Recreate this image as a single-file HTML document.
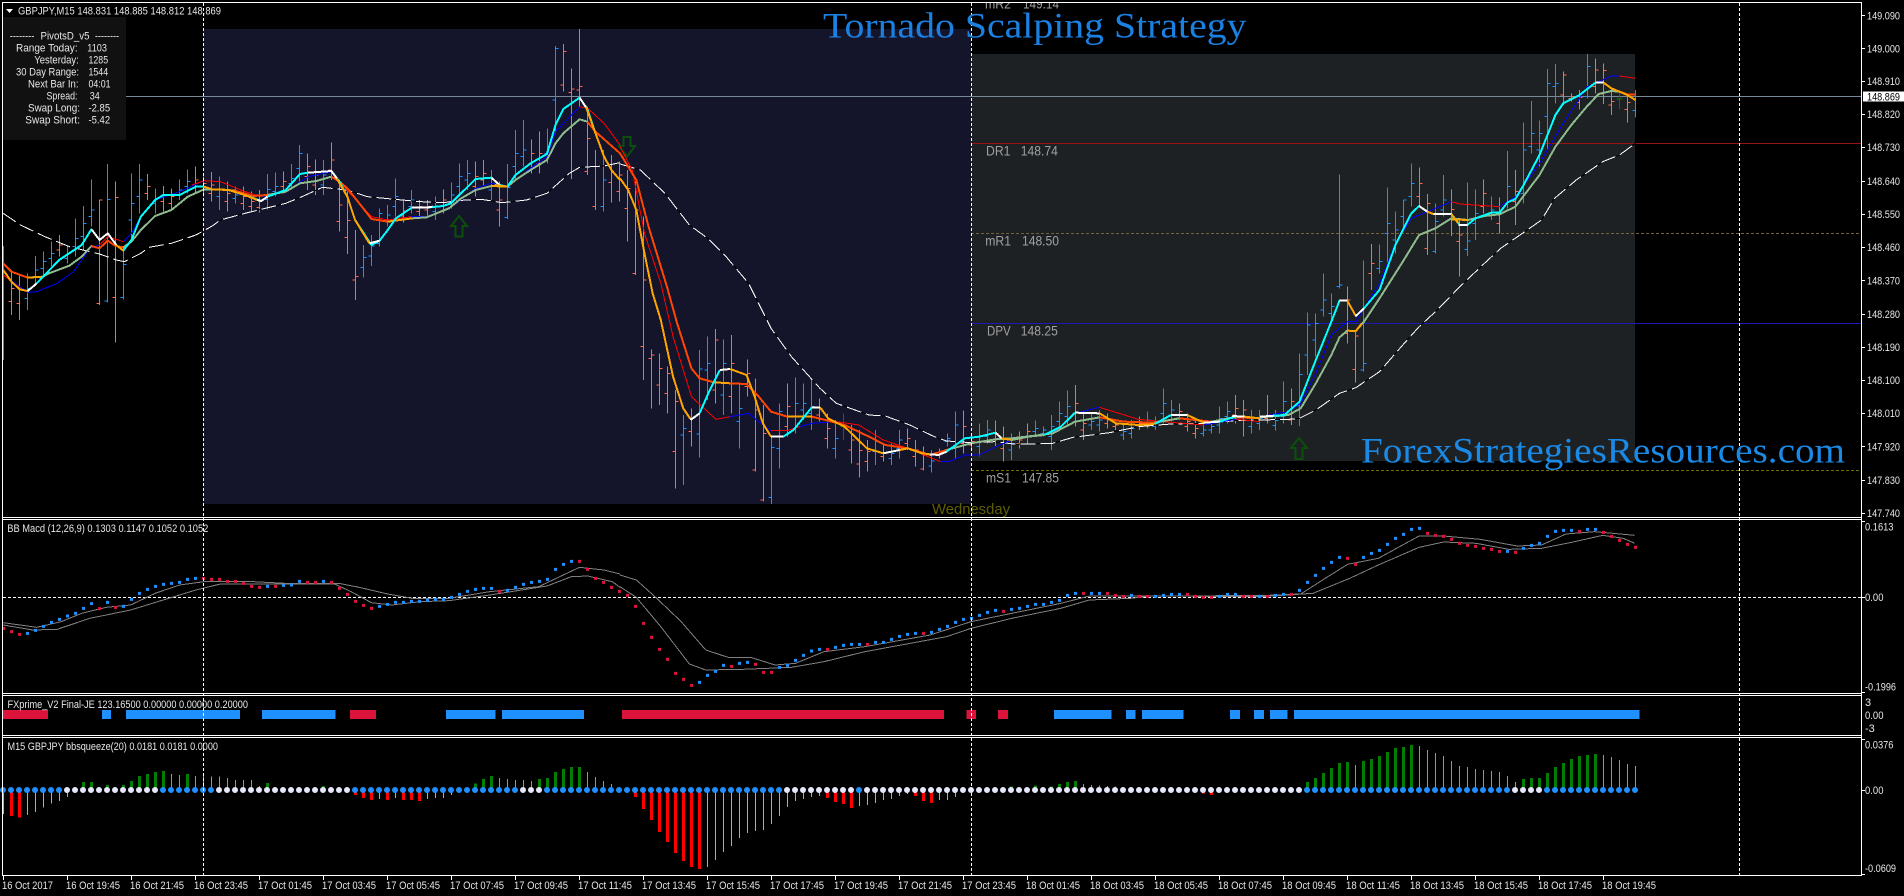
<!DOCTYPE html>
<html lang="en">
<head>
<meta charset="utf-8">
<title>Tornado Scalping Strategy</title>
<style>
html,body{margin:0;padding:0;background:#000;width:1904px;height:896px;overflow:hidden}
svg{position:absolute;left:0;top:0;display:block}
path,polyline{fill:none;vector-effect:non-scaling-stroke}
polyline{stroke-linejoin:round;shape-rendering:crispEdges}
text{font-family:"Liberation Sans",sans-serif;font-size:11px;fill:#e6e6e6}
.piv{font-size:13.5px;fill:#a0a0a0}
.ttl{font-family:"Liberation Serif",serif;font-size:36px;fill:#1a80e2}
.c{shape-rendering:crispEdges}
.f{stroke-width:2;stroke:#0ff}
.fo{stroke-width:2;stroke:#ffa500}
.fw{stroke-width:2;stroke:#fff}
.s{stroke-width:2;stroke:#8fbc8f}
.so{stroke-width:2;stroke:#ff4500}
.m{stroke-width:1;stroke:#0000ff}
.mr{stroke-width:1;stroke:#ff0000}
.k{stroke-width:1;stroke:#000}
.w{stroke-width:1;stroke:#fff;stroke-dasharray:15 5}
.g{stroke-width:1;stroke:#808080}
</style>
</head>
<body>
<svg width="1904" height="896" viewBox="0 0 1904 896" xmlns="http://www.w3.org/2000/svg">
<rect width="1904" height="896" fill="#000"/>
<rect x="203" y="29" width="768" height="475" fill="#14142b"/>
<rect x="971" y="54" width="664" height="407" fill="#1e2124"/>

<text class="piv" x="985" y="8.5" textLength="26" lengthAdjust="spacingAndGlyphs">mR2</text>
<text class="piv" x="1023" y="8.5" textLength="36" lengthAdjust="spacingAndGlyphs">149.14</text>
<rect width="1904" height="2" fill="#000"/>

<!-- levels -->
<g class="c">
<path d="M971 143.5H1861" stroke="#9a1414"/>
<path d="M971 233.5H1861" stroke="#7a6238" stroke-dasharray="3 2"/>
<path d="M971 323.5H1861" stroke="#1c1cb4"/>
<path d="M971 470.5H1861" stroke="#6e6e00" stroke-dasharray="3 2"/>
<path d="M126 96.5H1861" stroke="#778899"/>
</g>
<text class="piv" x="986" y="155.5" textLength="24.5" lengthAdjust="spacingAndGlyphs">DR1</text>
<text class="piv" x="1020.8" y="155.5" textLength="37" lengthAdjust="spacingAndGlyphs">148.74</text>
<text class="piv" x="985.3" y="245.5" textLength="25.7" lengthAdjust="spacingAndGlyphs">mR1</text>
<text class="piv" x="1022" y="245.5" textLength="37" lengthAdjust="spacingAndGlyphs">148.50</text>
<text class="piv" x="987" y="335.5" textLength="23.7" lengthAdjust="spacingAndGlyphs">DPV</text>
<text class="piv" x="1020.8" y="335.5" textLength="37" lengthAdjust="spacingAndGlyphs">148.25</text>
<text class="piv" x="986" y="482.5" textLength="25" lengthAdjust="spacingAndGlyphs">mS1</text>
<text class="piv" x="1022" y="482.5" textLength="37" lengthAdjust="spacingAndGlyphs">147.85</text>
<text x="932" y="514" style="font-size:15px;fill:#5f5f00" textLength="78" lengthAdjust="spacingAndGlyphs">Wednesday</text>

<!-- price bars -->
<g transform="scale(1 .33333)" class="c">
<path stroke="#1e90ff" d="M3.5 738V1080M27.5 820V930m-3-35h3m0-30h3M35.5 768V855m-3-25h3m0-20h3M43.5 755V830m-3-25h3m0-20h3M51.5 725V800m-3-25h3m0-15h3M67.5 735V790m-3-15h3m0-15h3M75.5 655V770m-3-30h3m0-25h3M83.5 618V750m-3-40h3m0-40h3M91.5 538V680m-3-30h3m0-20h3M107.5 492V908m-3-5h3m0-305h3M123.5 740V898m-3-5h3m0-100h3M131.5 520V720m-3-60h3m0-50h3M139.5 492V640m-3-50h3m0-50h3M155.5 566V640m-3-30h3m0-15h3M179.5 538V600m-3-15h3m0-15h3M187.5 508V580m-3-20h3m0-15h3M219.5 530V630m-3-40h3m0-20h3M235.5 560V610m-3-15h3m0-10h3M267.5 522V628m-3-30h3m0-30h3M275.5 518V590m-3-15h3m0-15h3M291.5 492V565m-3-15h3m0-15h3M299.5 435V545m-3-40h3m0-45h3M323.5 480V585m-3-30h3m0-30h3M363.5 735V833m-3-30h3m0-30h3M371.5 705V798m-3-30h3m0-30h3M379.5 625V740m-3-10h3m0-90h3M387.5 615V680m-3-20h3m0-15h3M395.5 535V650m-3-30h3m0-30h3M411.5 570V640m-3-20h3m0-20h3M435.5 590V660m-3-25h3m0-15h3M451.5 548V625m-3-20h3m0-20h3M459.5 490V590m-3-30h3m0-30h3M467.5 480V570m-3-30h3m0-20h3M491.5 510V600m-3-30h3m0-20h3M507.5 492V657m-3-5h3m0-90h3M515.5 390V540m-3-40h3m0-40h3M523.5 360V500m-3-30h3m0-20h3M547.5 385V490m-3-30h3m0-20h3M555.5 138V400m-3-100h3m0-155h3M603.5 450V635m-3-15h3m0-80h3M683.5 1245V1455m-3-150h3m0-20h3M699.5 1050V1372m-3-70h3m0-195h3M707.5 1010V1200m-3-90h3m0-20h3M723.5 1018V1245m-3-60h3m0-95h3M739.5 1150V1345m-3-80h3m0-40h3M771.5 1310V1512m-3-20h3m0-150h3M779.5 1210V1405m-3-60h3m0-110h3M795.5 1132V1300m-3-50h3m0-40h3M803.5 1150V1260m-3-30h3m0-20h3M811.5 1135V1290m-3-50h3m0-20h3M835.5 1260V1375m-3-30h3m0-30h3M875.5 1290V1395m-3-40h3m0-30h3M891.5 1330V1395m-3-20h3m0-15h3M899.5 1290V1375m-3-30h3m0-25h3M931.5 1350V1418m-3-20h3m0-15h3M947.5 1300V1340m-3-15h3m0-10h3M955.5 1235V1375m-3-50h3m0-50h3M979.5 1270V1370m-3-30h3m0-30h3M987.5 1260V1330m-3-20h3m0-20h3M1011.5 1300V1380m-3-30h3m0-20h3M1035.5 1262V1310m-3-15h3m0-10h3M1043.5 1280V1310m-3-10h3m0-10h3M1051.5 1245V1350m-3-40h3m0-30h3M1059.5 1205V1290m-3-25h3m0-25h3M1067.5 1172V1280m-3-30h3m0-30h3M1091.5 1240V1290m-3-15h3m0-10h3M1099.5 1230V1295m-3-20h3m0-15h3M1123.5 1270V1320m-3-15h3m0-10h3M1131.5 1260V1315m-3-15h3m0-15h3M1147.5 1235V1285m-3-15h3m0-10h3M1155.5 1250V1290m-3-10h3m0-10h3M1163.5 1165V1270m-3-30h3m0-30h3M1171.5 1200V1265m-3-20h3m0-15h3M1203.5 1270V1310m-3-10h3m0-10h3M1211.5 1265V1300m-3-10h3m0-10h3M1219.5 1220V1300m-3-25h3m0-20h3M1227.5 1205V1270m-3-20h3m0-15h3M1251.5 1230V1300m-3-20h3m0-20h3M1259.5 1230V1290m-3-20h3m0-15h3M1275.5 1230V1292m-3-15h3m0-15h3M1283.5 1145V1270m-3-20h3m0-45h3M1299.5 1060V1278m-3-60h3m0-95h3M1307.5 937V1125m-3-60h3m0-90h3M1315.5 940V1070m-3-50h3m0-50h3M1323.5 820V950m-3-20h3m0-30h3M1331.5 880V970m-3-30h3m0-20h3M1339.5 523V865m-3-5h3m0-5h3M1363.5 782V1115m-3-5h3m0-20h3M1379.5 733V820m-3-15h3m0-20h3M1387.5 562V800m-3-100h3m0-30h3M1395.5 634V760m-3-40h3m0-30h3M1403.5 600V690m-3-40h3m0-50h3M1411.5 490V620m-3-30h3m0-40h3M1435.5 610V760m-3-5h3m0-90h3M1443.5 525V650m-3-20h3m0-30h3M1467.5 547V768m-3-20h3m0-25h3M1475.5 568V720m-3-50h3m0-30h3M1491.5 590V660m-3-15h3m0-15h3M1507.5 453V625m-3-15h3m0-50h3M1523.5 367V610m-3-30h3m0-130h3M1531.5 303V460m-3-20h3m0-40h3M1539.5 362V500m-3-50h3m0-50h3M1547.5 207V450m-3-100h3m0-100h3M1555.5 192V310m-3-50h3m0-10h3M1587.5 162V295m-3-5h3m0-90h3M1635.5 270V352m-3-20h3"/>
<path stroke="#ff6a4d" d="M11.5 810V945m-3-40h3m0-40h3M19.5 820V960m-3-50h3m0-40h3M59.5 705V770m-3-20h3m0-15h3M99.5 598V915m-3-5h3m0-310h3M115.5 545V1028m-3-135h3m0-300h3M147.5 522V600m-3-20h3m0-20h3M163.5 558V635m-3-30h3m0-20h3M171.5 566V630m-3-20h3m0-20h3M195.5 500V580m-3-25h3m0-15h3M203.5 530V590m-3-20h3m0-20h3M211.5 516V605m-3-25h3m0-25h3M227.5 545V635m-3-30h3m0-25h3M243.5 560V630m-3-20h3m0-20h3M251.5 575V635m-3-15h3m0-15h3M259.5 570V638m-3-15h3m0-20h3M283.5 515V580m-3-20h3m0-15h3M307.5 460V570m-3-40h3m0-30h3M315.5 478V585m-3-30h3m0-30h3M331.5 427V540m-3-30h3m0-30h3M339.5 540V695m-3-30h3m0-50h3M347.5 575V762m-3-50h3m0-50h3M355.5 690V900m-3-60h3m0-10h3M403.5 600V668m-3-20h3m0-15h3M419.5 600V650m-3-15h3m0-15h3M427.5 600V650m-3-20h3m0-10h3M443.5 568V640m-3-20h3m0-20h3M475.5 485V590m-3-30h3m0-30h3M483.5 480V560m-3-20h3m0-20h3M499.5 545V680m-3-50h3m0-30h3M531.5 418V520m-3-30h3m0-30h3M539.5 395V520m-3-30h3m0-30h3M563.5 132V275m-3-20h3m0-100h3M571.5 205V537m-3-260h3m0-10h3M579.5 87V320m-3-50h3m0-10h3M587.5 320V525m-3-10h3m0-100h3M595.5 450V630m-3-10h3m0-120h3M611.5 465V608m-3-60h3m0-30h3M619.5 485V605m-3-30h3m0-50h3M627.5 510V725m-3-100h3m0-60h3M635.5 545V825m-3-5h3m0-190h3M643.5 650V1140m-3-100h3m0-200h3M651.5 1048V1225m-3-150h3m0-10h3M659.5 1060V1215m-3-60h3m0-50h3M667.5 1100V1240m-3-60h3m0-60h3M675.5 1170V1465m-3-110h3m0-150h3M691.5 1225V1340m-3-45h3m0-40h3M715.5 987V1210m-3-40h3m0-150h3M731.5 1005V1240m-3-50h3m0-100h3M747.5 1078V1190m-3-30h3m0-40h3M755.5 1135V1415m-3-5h3m0-180h3M763.5 1215V1505m-3-5h3m0-200h3M787.5 1150V1310m-3-30h3m0-60h3M819.5 1195V1265m-3-20h3m0-20h3M827.5 1240V1345m-3-30h3m0-30h3M851.5 1275V1390m-3-40h3m0-30h3M859.5 1290V1432m-3-40h3m0-40h3M867.5 1320V1415m-3-30h3m0-30h3M883.5 1335V1385m-3-15h3m0-10h3M907.5 1285V1350m-3-20h3m0-15h3M915.5 1320V1400m-3-30h3m0-20h3M923.5 1340V1412m-3-5h3m0-40h3M939.5 1345V1375m-3-10h3m0-5h3M963.5 1232V1360m-3-30h3m0-50h3M971.5 1300V1350m-3-15h3m0-10h3M995.5 1262V1340m-3-20h3m0-20h3M1003.5 1280V1385m-3-40h3m0-30h3M1019.5 1295V1345m-3-15h3m0-10h3M1027.5 1270V1330m-3-20h3m0-15h3M1075.5 1155V1280m-3-40h3m0-30h3M1083.5 1235V1320m-3-30h3m0-20h3M1107.5 1240V1285m-3-15h3m0-10h3M1115.5 1265V1290m-3-10h3m0-5h3M1139.5 1250V1290m-3-10h3m0-10h3M1179.5 1210V1260m-3-15h3m0-10h3M1187.5 1240V1295m-3-15h3m0-15h3M1195.5 1260V1315m-3-15h3m0-15h3M1235.5 1185V1270m-3-25h3m0-20h3M1243.5 1200V1310m-3-50h3m0-30h3M1267.5 1185V1270m-3-15h3m0-10h3M1291.5 1165V1275m-3-15h3m0-55h3M1347.5 860V1030m-3-30h3m0-100h3M1355.5 990V1148m-3-40h3m0-100h3M1371.5 732V870m-3-50h3m0-30h3M1419.5 502V620m-3-30h3m0-40h3M1427.5 582V765m-3-20h3m0-135h3M1451.5 568V708m-3-50h3m0-30h3M1459.5 660V830m-3-105h3m0-20h3M1483.5 538V640m-3-20h3m0-40h3M1499.5 593V700m-3-30h3m0-30h3M1515.5 510V675m-3-70h3m0-30h3M1563.5 215V315m-3-30h3m0-60h3M1571.5 280V305m-3-10h3m0-5h3M1579.5 270V328m-3-20h3m0-15h3M1595.5 175V280m-3-20h3m0-50h3M1603.5 190V312m-3-30h3m0-70h3M1611.5 265V345m-3-30h3m0-10h3M1627.5 290V368m-3-40h3m0-20h3"/>
<path stroke="#007a00" d="M843.5 1240V1320m-3-40h6M1619.5 270V327m-3-30h6"/>
</g>

<!-- arrows -->
<g fill="none" stroke="#0b4f0b" stroke-width="2" class="c">
<path d="M459 216L467 226H462.500V236.500H455.500V226H451Z" style="shape-rendering:auto"/>
<path d="M627 156.500L635 146H630.500V137H623.500V146H619Z" style="shape-rendering:auto"/>
<path d="M1299 438L1307 448H1302.500V459H1295.500V448H1291Z" style="shape-rendering:auto"/>
</g>

<!-- zone 1 lines -->
<g transform="scale(.40816 .33333)">
<polyline class="k" points="8,640 50,675 110,710 170,740 244,762 285,780 305,785 345,760 365,742 420,730 480,705 520,678 540,660 600,640 700,610 740,590 790,562 850,570 900,590 985,600 1030,605 1085,608 1140,600 1180,598 1230,608 1290,600 1340,580 1395,520 1420,502 1480,498 1519,488"/>
<polyline class="w" points="8,640 50,675 110,710 170,740 244,762 285,780 305,785 345,760 365,742 420,730 480,705 520,678 540,660 600,640 700,610 740,590 790,562 850,570 900,590 985,600 1030,605 1085,608 1140,600 1180,598 1230,608 1290,600 1340,580 1395,520 1420,502 1480,498 1519,488"/>
<polyline class="m" points="8,825 68,877 90,875 140,850 180,815 220,745 244,735 264,710 302,725 322,700 345,650 380,600 440,575 500,542 540,545 600,575 640,590 700,575 755,530 812,515 850,570 910,650 950,660 1010,650 1045,650 1105,622 1165,565 1204,550 1243,560 1300,505 1340,470 1361,395 1420,320 1440,325 1480,370 1519,435"/>
<polyline class="mr" points="8,825 50,865"/><polyline class="mr" points="244,735 264,710 302,725"/><polyline class="mr" points="470,555 500,542 540,545 600,575 640,590"/><polyline class="mr" points="812,515 850,570 910,650 950,660 1010,650"/><polyline class="mr" points="1420,320 1440,325 1480,370 1519,435"/>
<polyline class="s" points="8,790 28,815 68,833 105,830 120,820 170,797 200,770 224,738 244,745 264,722 283,738 302,742 322,725 345,690 380,648 420,630 460,590 500,568 540,568 575,572 620,588 655,585 700,575 735,550 775,543 812,530 832,545 851,565 890,625 910,657 950,665 1010,655 1045,652 1100,625 1130,595 1165,570 1204,558 1243,560 1263,540 1300,510 1340,480 1361,430 1380,400 1420,358 1439,365 1459,395 1519,460"/>
<polyline class="so" points="8,790 28,815 68,833"/><polyline class="fo" points="68,833 105,830"/><polyline class="so" points="224,738 244,745 264,722 283,738 302,742"/><polyline class="fo" points="520,568 540,568 575,572"/><polyline class="so" points="575,572 620,588 655,585"/><polyline class="so" points="812,530 832,545 851,565 890,625 910,657 950,665"/><polyline class="fo" points="950,665 1010,655"/><polyline class="fo" points="1204,558 1243,560"/><polyline class="so" points="1439,365 1459,395 1519,460"/>
<polyline class="f" points="8,810 28,845 48,868 68,873 90,850 145,780 200,735 224,688 244,720 264,700 285,735 302,752 322,720 345,650 380,600 400,585 440,585 480,560 500,560 520,568 560,570 600,585 640,603 655,590 700,570 735,522 755,518 812,513 832,545 851,590 870,660 910,735 930,722 950,690 970,655 1010,622 1045,623 1085,618 1105,610 1165,537 1204,533 1224,555 1243,560 1263,525 1300,490 1340,462 1361,375 1380,327 1420,293 1440,330 1459,400 1480,470 1498,510 1519,540"/>
<polyline class="fo" points="8,810 28,845 48,868 68,873"/><polyline class="fw" points="68,873 90,850"/><polyline class="fw" points="224,688 244,720 264,700 285,735"/><polyline class="fo" points="285,735 302,752"/><polyline class="fo" points="500,560 520,568 560,570 600,585 630,600"/><polyline class="fw" points="630,600 640,603 655,590"/><polyline class="fw" points="755,518 812,513 825,535"/><polyline class="fo" points="825,535 851,590 870,660 905,730"/><polyline class="fw" points="905,730 930,722"/><polyline class="fw" points="1010,622 1045,623 1060,620"/><polyline class="fw" points="1204,533 1224,555"/><polyline class="fo" points="1212,555 1243,560"/><polyline class="fw" points="1420,293 1436,322"/><polyline class="fo" points="1436,322 1459,400 1480,470 1498,510 1519,540"/>
</g>

<!-- zone 2 lines -->
<g transform="translate(620 0) scale(.40816 .33333)">
<polyline class="k" points="0,492 50,510 110,580 170,675 215,715 260,770 315,850 370,985 420,1070 490,1165 530,1210 610,1245 650,1248 710,1275 770,1310 800,1323 860,1328 920,1325 970,1333 1060,1330 1110,1312 1200,1298 1270,1280 1350,1272 1430,1270 1510,1262 1568,1260"/>
<polyline class="w" points="0,492 50,510 110,580 170,675 215,715 260,770 315,850 370,985 420,1070 490,1165 530,1210 610,1245 650,1248 710,1275 770,1310 800,1323 860,1328 920,1325 970,1333 1060,1330 1110,1312 1200,1298 1270,1280 1350,1272 1430,1270 1510,1262 1568,1260"/>
<polyline class="mr" points="0,440 30,510 60,700 100,850 130,1010 175,1190 235,1258 270,1250"/>
<polyline class="m" points="270,1250 315,1240 345,1270 370,1292"/>
<polyline class="mr" points="370,1292 410,1292 440,1280"/>
<polyline class="m" points="440,1280 470,1270 530,1265"/>
<polyline class="mr" points="530,1265 585,1275 645,1320 705,1345 785,1385"/>
<polyline class="m" points="785,1385 805,1385 845,1365 880,1365 920,1340 960,1320 1060,1300 1115,1240 1175,1222"/>
<polyline class="mr" points="1175,1222 1270,1258 1360,1268 1430,1275"/>
<polyline class="m" points="1430,1275 1510,1258"/>
<polyline class="mr" points="1510,1258 1568,1265"/>
<polyline class="so" points="0,460 40,540 70,680 115,860 140,970 175,1105 195,1135 230,1147 270,1150 310,1152 340,1190 370,1235 410,1250 470,1250 510,1262 550,1275 610,1310 650,1335 705,1345 760,1365 800,1350"/>
<polyline class="s" points="800,1350 860,1330 920,1318 960,1315 1030,1305 1060,1300 1115,1265 1175,1252"/>
<polyline class="fo" points="230,1147 270,1150"/>
<polyline class="fo" points="410,1250 470,1250"/>
<polyline class="so" points="1175,1252 1235,1265 1310,1268"/>
<polyline class="s" points="1310,1268 1370,1255"/>
<polyline class="so" points="1370,1255 1410,1260 1450,1265"/>
<polyline class="s" points="1450,1265 1490,1255 1510,1252"/>
<polyline class="so" points="1510,1252 1568,1255"/>
<polyline class="fo" points="0,535 20,570 40,630 60,760 80,880 100,960 130,1130 155,1225 172,1256"/>
<polyline class="fw" points="172,1256 175,1258 195,1240"/>
<polyline class="f" points="195,1240 220,1170 245,1110"/>
<polyline class="fw" points="245,1110 270,1107"/>
<polyline class="fo" points="270,1107 310,1125 330,1190 350,1270 370,1310"/>
<polyline class="fw" points="370,1310 400,1310"/>
<polyline class="f" points="400,1310 425,1290 470,1222"/>
<polyline class="fw" points="470,1222 490,1222"/>
<polyline class="fo" points="490,1222 510,1255 550,1280 605,1345 645,1360"/>
<polyline class="fw" points="645,1360 685,1350"/>
<polyline class="fo" points="685,1350 705,1345 740,1360 760,1363"/>
<polyline class="fw" points="760,1363 780,1365 800,1355"/>
<polyline class="f" points="800,1355 845,1315 880,1310 920,1298"/>
<polyline class="fw" points="920,1298 935,1315"/>
<polyline class="fo" points="935,1315 960,1320"/>
<polyline class="s" points="960,1320 1000,1310 1040,1305"/>
<polyline class="f" points="1040,1305 1080,1280 1115,1238"/>
<polyline class="fw" points="1115,1238 1175,1240"/>
<polyline class="fo" points="1175,1240 1215,1270 1270,1275 1310,1272"/>
<polyline class="f" points="1310,1272 1350,1245"/>
<polyline class="fw" points="1350,1245 1390,1245"/>
<polyline class="fo" points="1390,1245 1430,1268"/>
<polyline class="fw" points="1430,1268 1470,1265"/>
<polyline class="f" points="1470,1265 1510,1248"/>
<polyline class="fw" points="1500,1248 1530,1250"/>
<polyline class="fo" points="1530,1250 1568,1255"/>
</g>

<!-- zone 3 lines -->
<g transform="translate(1264 0) scale(.40816 .33333)">
<polyline class="k" points="-10,1260 60,1258 87,1255 127,1230 185,1180 225,1163 283,1115 340,1035 380,980 420,935 480,860 540,790 580,745 680,660 712,595 765,540 830,485 871,465 910,430"/>
<polyline class="w" points="-10,1260 60,1258 87,1255 127,1230 185,1180 225,1163 283,1115 340,1035 380,980 420,935 480,860 540,790 580,745 680,660 712,595 765,540 830,485 871,465 910,430"/>
<polyline class="m" points="-10,1250 60,1235 90,1210 127,1120 165,1005 204,965 225,965 283,850 322,730 361,655 420,625 459,605 480,612 577,620 616,590 675,490 733,370 792,260 851,228 871,228"/>
<polyline class="mr" points="459,605 480,612 577,620"/>
<polyline class="mr" points="871,228 910,235"/>
<polyline class="s" points="-10,1252 60,1245 90,1225 127,1150 165,1065 185,1012 204,992 225,993 245,965 283,895 340,785 380,705 420,685 459,655 500,660 540,648 577,643 616,620 675,525 714,440 753,375 792,318 820,282 851,273 871,275 890,283 910,283"/>
<polyline class="fo" points="204,992 225,993 240,970"/>
<polyline class="fo" points="459,658 500,660"/>
<polyline class="so" points="871,275 890,283 910,283"/>
<polyline class="f" points="-10,1250 50,1245 87,1205 127,1080 165,965 185,902 204,902 225,948 245,925 283,870 322,735 361,640 380,618 400,635 415,642 459,642 480,675 498,675 518,655 557,638 577,638 597,607 616,597 636,555 675,465 714,345 733,310 773,285 812,248 832,248 851,265 871,275 890,285 910,300"/>
<polyline class="fw" points="-10,1250 25,1247"/>
<polyline class="fw" points="185,902 204,902"/>
<polyline class="fo" points="204,902 225,948"/>
<polyline class="fw" points="225,948 245,925"/>
<polyline class="fw" points="380,618 400,635"/>
<polyline class="fo" points="400,635 415,642"/>
<polyline class="fw" points="415,642 459,642"/>
<polyline class="fo" points="459,642 476,670"/>
<polyline class="fw" points="476,675 498,675"/>
<polyline class="fw" points="812,248 832,248"/>
<polyline class="fo" points="832,248 851,265 871,275 890,285 910,300"/>
</g>

<!-- MACD pane -->
<g transform="translate(0 510) scale(1 .33333)" class="c">
<path stroke="#fff" stroke-dasharray="3 2" d="M3 262H1861"/>
</g>
<g transform="translate(0 510) scale(.40816 .33333)">
<polyline class="g" points="8,338 90,352 150,335 200,310 260,292 320,285 380,250 440,225 500,215 620,215 700,220 830,220 880,232 950,252 1010,265 1100,265 1200,245 1320,230 1380,195 1420,172 1480,180 1519,192"/>
<polyline class="g" points="8,345 80,360 140,358 220,325 320,300 400,270 480,240 540,222 820,222 860,245 910,278 960,285 1030,275 1100,272 1200,255 1340,228 1400,200 1440,198 1500,215 1519,232"/>
</g>
<g transform="translate(620 510) scale(.40816 .33333)">
<polyline class="g" points="0,195 40,210 90,265 150,335 210,420 265,442 320,442 380,465 430,460 500,425 600,410 760,375 860,335 960,310 1080,280 1150,258 1568,257"/>
<polyline class="g" points="0,230 40,262 100,350 170,462 210,480 300,478 420,472 500,455 600,425 800,380 860,355 960,325 1080,295 1150,270 1250,265 1300,258 1568,260"/>
</g>
<g transform="translate(1264 510) scale(.40816 .33333)">
<polyline class="g" points="-10,257 90,252 150,205 205,163 280,145 380,78 440,78 530,88 620,108 680,105 740,72 810,65 908,76"/>
<polyline class="g" points="-10,260 120,250 210,205 280,165 380,112 440,96 520,100 600,118 680,115 750,98 830,76 880,85 908,100"/>
</g>
<g transform="translate(0 510) scale(1 .33333)">
<path stroke="#1e90ff" stroke-width="3" stroke-linecap="square" d="M27.5 370h.01M35.5 361h.01M43.5 349h.01M51.5 337h.01M59.5 328h.01M67.5 318h.01M75.5 310h.01M83.5 295h.01M91.5 281h.01M107.500 277h.01M123.5 289h.01M131.5 268h.01M139.5 250h.01M147.5 238h.01M155.5 229h.01M163.5 223h.01M171.5 220h.01M179.5 217h.01M187.5 208h.01M195.5 205h.01M267.5 229h.01M283.5 226h.01M291.5 225h.01M299.5 214h.01M323.5 214h.01M379.5 289h.01M387.5 283h.01M395.5 277h.01M403.5 277h.01M411.5 274h.01M419.5 274h.01M427.5 271h.01M435.5 268h.01M443.5 268h.01M451.5 262h.01M459.5 253h.01M467.5 244h.01M475.5 238h.01M483.5 235h.01M491.5 235h.01M507.5 241h.01M515.5 232h.01M523.5 223h.01M531.5 217h.01M539.5 214h.01M547.5 208h.01M555.5 178h.01M563.5 163h.01M571.5 154h.01M699.5 517h.01M707.5 496h.01M715.5 484h.01M723.5 466h.01M739.5 460h.01M747.5 457h.01M779.5 472h.01M787.5 466h.01M795.5 451h.01M803.5 436h.01M811.5 423h.01M819.5 418h.01M835.5 412h.01M843.5 406h.01M851.5 403h.01M859.5 403h.01M875.5 397h.01M883.5 397h.01M891.5 388h.01M899.5 379h.01M907.5 373h.01M915.5 370h.01M931.5 367h.01M939.5 358h.01M947.5 349h.01M955.5 337h.01M963.5 328h.01M971.5 325h.01M979.5 316h.01M987.5 307h.01M995.5 301h.01M1011.5 298h.01M1019.5 295h.01M1027.5 289h.01M1035.5 283h.01M1043.5 283h.01M1051.5 277h.01M1059.5 271h.01M1067.5 256h.01M1075.5 250h.01M1091.5 250h.01M1099.5 250h.01M1131.5 256h.01M1155.5 259h.01M1163.5 256h.01M1171.5 253h.01M1179.5 253h.01M1219.5 259h.01M1227.5 253h.01M1235.5 253h.01M1259.5 259h.01M1275.5 256h.01M1283.5 253h.01M1299.5 241h.01M1307.5 217h.01M1315.5 196h.01M1323.5 175h.01M1331.5 157h.01M1339.5 142h.01M1363.5 142h.01M1371.5 130h.01M1379.5 121h.01M1387.5 103h.01M1395.5 85h.01M1403.5 73h.01M1411.5 58h.01M1419.5 55h.01M1507.5 124h.01M1523.5 115h.01M1531.5 106h.01M1539.5 100h.01M1547.5 79h.01M1555.5 64h.01M1563.5 61h.01M1571.5 61h.01M1587.5 58h.01M1595.5 58h.01"/>
<path stroke="#dc143c" stroke-width="3" stroke-linecap="square" d="M3.5 355h.01M11.5 365h.01M19.5 373h.01M99.5 296h.01M115.5 292h.01M203.5 205h.01M211.5 208h.01M219.5 208h.01M227.5 214h.01M235.5 214h.01M243.5 220h.01M251.5 229h.01M259.5 232h.01M275.5 229h.01M307.5 217h.01M315.5 217h.01M331.5 217h.01M339.5 235h.01M347.5 253h.01M355.5 274h.01M363.5 286h.01M371.5 295h.01M499.5 244h.01M579.5 154h.01M587.5 178h.01M595.5 205h.01M603.5 217h.01M611.5 232h.01M619.5 244h.01M627.5 256h.01M635.5 289h.01M643.5 340h.01M651.5 382h.01M659.5 418h.01M667.5 448h.01M675.5 490h.01M683.5 508h.01M691.5 526h.01M731.5 469h.01M755.5 463h.01M763.5 487h.01M771.5 487h.01M827.5 418h.01M867.5 403h.01M923.5 370h.01M1003.5 304h.01M1083.5 250h.01M1107.5 250h.01M1115.5 256h.01M1123.5 259h.01M1139.5 259h.01M1147.5 259h.01M1187.5 253h.01M1195.5 259h.01M1203.5 262h.01M1211.5 262h.01M1243.5 259h.01M1251.5 259h.01M1267.5 259h.01M1291.5 253h.01M1347.5 145h.01M1355.5 163h.01M1427.5 70h.01M1435.5 76h.01M1443.5 79h.01M1451.5 88h.01M1459.5 100h.01M1467.5 106h.01M1475.5 109h.01M1483.5 115h.01M1491.5 118h.01M1499.5 124h.01M1515.5 127h.01M1579.5 64h.01M1603.5 67h.01M1611.5 79h.01M1619.5 91h.01M1627.5 103h.01M1635.5 112h.01"/>
</g>

<!-- FXprime bars -->
<g class="c">
<g fill="#dc143c">
<rect x="3" y="710" width="45" height="9"/>
<rect x="350" y="710" width="26" height="9"/>
<rect x="622" y="710" width="322" height="9"/>
<rect x="966.500" y="710" width="9.500" height="9"/>
<rect x="998" y="710" width="10" height="9"/>
</g>
<g fill="#1e90ff">
<rect x="102" y="710" width="9" height="9"/>
<rect x="126" y="710" width="114" height="9"/>
<rect x="262" y="710" width="73.500" height="9"/>
<rect x="446" y="710" width="49.500" height="9"/>
<rect x="502" y="710" width="82" height="9"/>
<rect x="1054" y="710" width="57.500" height="9"/>
<rect x="1126" y="710" width="9.500" height="9"/>
<rect x="1142" y="710" width="41.700" height="9"/>
<rect x="1230" y="710" width="10" height="9"/>
<rect x="1254" y="710" width="10" height="9"/>
<rect x="1270" y="710" width="17.700" height="9"/>
<rect x="1294" y="710" width="345.500" height="9"/>
</g>
</g>

<!-- squeeze histogram -->
<g transform="translate(0 510) scale(1 .33333)" class="c">
<path stroke="#008000" stroke-width="3" d="M83.500 840V816M91.500 840V816M107.500 840V825M123.500 840V825M131.500 840V813M139.500 840V798M147.500 840V792M155.500 840V786M163.500 840V783M187.500 840V792M267.500 840V819M323.500 840V828M475.500 840V820M483.500 840V807M491.500 840V798M539.500 840V807M547.500 840V804M555.500 840V786M563.500 840V777M571.500 840V771M579.500 840V771M1011.500 840V830M1019.500 840V832M1035.500 840V826M1051.500 840V829M1059.500 840V822M1067.500 840V816M1075.500 840V813M1307.500 840V816M1315.500 840V804M1323.500 840V789M1331.500 840V774M1339.500 840V759M1347.500 840V756M1363.500 840V753M1371.500 840V747M1379.500 840V738M1387.500 840V726M1395.500 840V714M1403.500 840V711M1411.500 840V705M1523.500 840V807M1531.500 840V804M1539.500 840V804M1547.500 840V789M1555.500 840V771M1563.500 840V759M1571.500 840V747M1579.500 840V738M1587.500 840V735M1595.500 840V732"/>
<path stroke="#00ff00" stroke-width="1" d="M171.500 840V792M179.500 840V795M195.500 840V798M203.500 840V798M211.500 840V800M219.500 840V800M227.500 840V804M235.500 840V810M243.500 840V810M251.500 840V810M259.500 840V828M499.500 840V804M507.500 840V807M515.500 840V810M523.500 840V810M531.500 840V813M587.500 840V786M595.500 840V801M603.500 840V813M611.500 840V822M619.500 840V831M1083.500 840V822M1091.500 840V825M1099.500 840V826M1107.500 840V828M1115.500 840V830M1355.500 840V765M1419.500 840V708M1427.500 840V720M1435.500 840V729M1443.500 840V738M1451.500 840V753M1459.500 840V768M1467.500 840V771M1475.500 840V777M1483.500 840V780M1491.500 840V783M1499.500 840V786M1507.500 840V798M1515.500 840V816M1603.500 840V735M1611.500 840V741M1619.500 840V750M1627.500 840V762M1635.500 840V768"/>
<path stroke="#ff0000" stroke-width="3" d="M11.500 840V918M19.500 840V923M355.500 840V855M363.500 840V864M371.500 840V870M387.500 840V870M403.500 840V870M411.500 840V870M419.500 840V873M635.500 840V861M643.500 840V897M651.500 840V930M659.500 840V966M667.500 840V996M675.500 840V1029M683.500 840V1053M691.500 840V1071M699.500 840V1077M827.500 840V864M835.500 840V876M843.500 840V882M851.500 840V894M915.500 840V858M923.500 840V873M931.500 840V879M1203.500 840V850M1211.500 840V855"/>
<path stroke="#ffa500" stroke-width="1" d="M3.500 840V912M27.500 840V915M35.500 840V906M43.500 840V893M51.500 840V881M59.500 840V873M67.500 840V861M379.500 840V867M395.500 840V864M427.500 840V867M435.500 840V864M443.500 840V864M451.500 840V855M707.500 840V1071M715.500 840V1050M723.500 840V1026M731.500 840V1008M739.500 840V984M747.500 840V969M755.500 840V963M763.500 840V960M771.500 840V942M779.500 840V918M787.500 840V891M795.500 840V873M803.500 840V867M811.500 840V861M819.500 840V858M859.500 840V888M867.500 840V885M875.500 840V879M883.500 840V870M891.500 840V867M899.500 840V858M907.500 840V852M939.500 840V870M947.500 840V870M955.500 840V861"/>
</g>
<g transform="translate(-.5 0)">
<path stroke="#1e90ff" stroke-width="6" stroke-linecap="round" stroke-dasharray="0 8" d="M3.500 790H59.510M163.500 790H211.510M355.500 790H515.510M547.500 790H779.510M859.500 790h.01M1307.500 790H1507.510M1547.500 790H1635.510"/>
<path stroke="#e6e6fa" stroke-width="6" stroke-linecap="round" stroke-dasharray="0 8" d="M67.500 790H155.510M219.500 790H347.510M523.500 790H539.510M787.500 790H851.510M867.500 790H1299.510M1515.500 790H1539.510"/>
</g>

<!-- vertical separators -->
<g class="c" stroke="#fff" stroke-dasharray="3 2">
<path d="M203.500 3V875"/>
<path d="M971.500 3V875"/>
<path d="M1739.500 3V875"/>
</g>

<!-- pane frames -->
<g class="c" stroke="#fff">
<path d="M2 2.500H1862"/>
<path d="M2.500 2V876"/>
<path d="M1861.500 2V876"/>
<path d="M2 517.500H1862M2 519.500H1862"/>
<path d="M2 693.500H1862M2 695.500H1862"/>
<path d="M2 735.500H1862M2 737.500H1862"/>
<path d="M2 875.500H1862"/>
<path d="M1862 15.500h3M1862 48.500h3M1862 81.500h3M1862 114.500h3M1862 147.500h3M1862 181.500h3M1862 214.500h3M1862 247.500h3M1862 280.500h3M1862 314.500h3M1862 347.500h3M1862 380.500h3M1862 413.500h3M1862 446.500h3M1862 480.500h3M1862 513.500h3"/>
<path d="M1862 521.500h3M1862 597.500h3M1862 692.500h3M1862 739.500h3M1862 790.500h3M1862 874.500h3"/>
<path d="M3.500 876v4M67.500 876v4M131.500 876v4M195.500 876v4M259.500 876v4M323.500 876v4M387.500 876v4M451.500 876v4M515.500 876v4M579.500 876v4M643.500 876v4M707.500 876v4M771.500 876v4M835.500 876v4M899.500 876v4M963.500 876v4M1027.500 876v4M1091.500 876v4M1155.500 876v4M1219.500 876v4M1283.500 876v4M1347.500 876v4M1411.500 876v4M1475.500 876v4M1539.500 876v4M1603.500 876v4"/>
</g>

<!-- info panel -->
<rect x="3" y="17" width="123" height="123" fill="#111"/>
<polygon points="6,9 13,9 9.500,13" fill="#fff"/>
<text x="18" y="14.500" textLength="203" lengthAdjust="spacingAndGlyphs">GBPJPY,M15  148.831 148.885 148.812 148.869</text>
<text x="9.800" y="39.500" textLength="24.500" lengthAdjust="spacingAndGlyphs">--------</text>
<text x="40.500" y="39.500" textLength="49" lengthAdjust="spacingAndGlyphs">PivotsD_v5</text>
<text x="95" y="39.500" textLength="24" lengthAdjust="spacingAndGlyphs">--------</text>
<text x="16" y="51.500" textLength="61.600" lengthAdjust="spacingAndGlyphs">Range  Today:</text>
<text x="87.300" y="51.500" textLength="19.600" lengthAdjust="spacingAndGlyphs">1103</text>
<text x="34.300" y="63.500" textLength="44.500" lengthAdjust="spacingAndGlyphs">Yesterday:</text>
<text x="88.500" y="63.500" textLength="19.600" lengthAdjust="spacingAndGlyphs">1285</text>
<text x="16" y="75.500" textLength="63" lengthAdjust="spacingAndGlyphs">30 Day Range:</text>
<text x="88.500" y="75.500" textLength="19.600" lengthAdjust="spacingAndGlyphs">1544</text>
<text x="28" y="87.500" textLength="50.500" lengthAdjust="spacingAndGlyphs">Next Bar In:</text>
<text x="88.500" y="87.500" textLength="22" lengthAdjust="spacingAndGlyphs">04:01</text>
<text x="46.500" y="99.500" textLength="31" lengthAdjust="spacingAndGlyphs">Spread:</text>
<text x="89.800" y="99.500" textLength="10" lengthAdjust="spacingAndGlyphs">34</text>
<text x="28" y="111.500" textLength="52" lengthAdjust="spacingAndGlyphs">Swap  Long:</text>
<text x="88.500" y="111.500" textLength="21.600" lengthAdjust="spacingAndGlyphs">-2.85</text>
<text x="25.300" y="123.500" textLength="54.700" lengthAdjust="spacingAndGlyphs">Swap  Short:</text>
<text x="88.500" y="123.500" textLength="21.600" lengthAdjust="spacingAndGlyphs">-5.42</text>

<!-- pane labels -->
<text x="7.300" y="532" textLength="201" lengthAdjust="spacingAndGlyphs">BB Macd (12,26,9) 0.1303 0.1147 0.1052 0.1052</text>
<text x="7.500" y="708" textLength="240.500" lengthAdjust="spacingAndGlyphs">FXprime_V2 Final-JE 123.16500 0.00000 0.00000 0.20000</text>
<text x="7.500" y="750" textLength="210.500" lengthAdjust="spacingAndGlyphs">M15 GBPJPY bbsqueeze(20) 0.0181 0.0181 0.0000</text>

<!-- price axis -->
<g>
<text x="1867" y="19.500" textLength="33" lengthAdjust="spacingAndGlyphs">149.090</text>
<text x="1867" y="52.500" textLength="33" lengthAdjust="spacingAndGlyphs">149.000</text>
<text x="1867" y="85.200" textLength="33" lengthAdjust="spacingAndGlyphs">148.910</text>
<text x="1867" y="118.200" textLength="33" lengthAdjust="spacingAndGlyphs">148.820</text>
<text x="1867" y="151.200" textLength="33" lengthAdjust="spacingAndGlyphs">148.730</text>
<text x="1867" y="185.200" textLength="33" lengthAdjust="spacingAndGlyphs">148.640</text>
<text x="1867" y="218.200" textLength="33" lengthAdjust="spacingAndGlyphs">148.550</text>
<text x="1867" y="251.200" textLength="33" lengthAdjust="spacingAndGlyphs">148.460</text>
<text x="1867" y="284.500" textLength="33" lengthAdjust="spacingAndGlyphs">148.370</text>
<text x="1867" y="318.200" textLength="33" lengthAdjust="spacingAndGlyphs">148.280</text>
<text x="1867" y="351.200" textLength="33" lengthAdjust="spacingAndGlyphs">148.190</text>
<text x="1867" y="384.200" textLength="33" lengthAdjust="spacingAndGlyphs">148.100</text>
<text x="1867" y="417.200" textLength="33" lengthAdjust="spacingAndGlyphs">148.010</text>
<text x="1867" y="450.500" textLength="33" lengthAdjust="spacingAndGlyphs">147.920</text>
<text x="1867" y="484.200" textLength="33" lengthAdjust="spacingAndGlyphs">147.830</text>
<text x="1867" y="517.200" textLength="33" lengthAdjust="spacingAndGlyphs">147.740</text>
<rect x="1863" y="91.500" width="41" height="10" fill="#fff"/>
<text x="1867" y="100.500" style="fill:#000" textLength="33" lengthAdjust="spacingAndGlyphs">148.869</text>
<text x="1865" y="530.500" textLength="28.500" lengthAdjust="spacingAndGlyphs">0.1613</text>
<text x="1865" y="601" textLength="18.500" lengthAdjust="spacingAndGlyphs">0.00</text>
<text x="1865" y="690.500" textLength="31" lengthAdjust="spacingAndGlyphs">-0.1996</text>
<text x="1865" y="706">3</text>
<text x="1865" y="719" textLength="18.500" lengthAdjust="spacingAndGlyphs">0.00</text>
<text x="1865" y="732">-3</text>
<text x="1865" y="748.500" textLength="28.500" lengthAdjust="spacingAndGlyphs">0.0376</text>
<text x="1865" y="794" textLength="18.500" lengthAdjust="spacingAndGlyphs">0.00</text>
<text x="1865" y="872" textLength="31" lengthAdjust="spacingAndGlyphs">-0.0609</text>
</g>

<!-- time axis -->
<g>
<text x="2" y="889" textLength="51" lengthAdjust="spacingAndGlyphs">16 Oct 2017</text>
<text x="66" y="889" textLength="54" lengthAdjust="spacingAndGlyphs">16 Oct 19:45</text>
<text x="130" y="889" textLength="54" lengthAdjust="spacingAndGlyphs">16 Oct 21:45</text>
<text x="194" y="889" textLength="54" lengthAdjust="spacingAndGlyphs">16 Oct 23:45</text>
<text x="258" y="889" textLength="54" lengthAdjust="spacingAndGlyphs">17 Oct 01:45</text>
<text x="322" y="889" textLength="54" lengthAdjust="spacingAndGlyphs">17 Oct 03:45</text>
<text x="386" y="889" textLength="54" lengthAdjust="spacingAndGlyphs">17 Oct 05:45</text>
<text x="450" y="889" textLength="54" lengthAdjust="spacingAndGlyphs">17 Oct 07:45</text>
<text x="514" y="889" textLength="54" lengthAdjust="spacingAndGlyphs">17 Oct 09:45</text>
<text x="578" y="889" textLength="54" lengthAdjust="spacingAndGlyphs">17 Oct 11:45</text>
<text x="642" y="889" textLength="54" lengthAdjust="spacingAndGlyphs">17 Oct 13:45</text>
<text x="706" y="889" textLength="54" lengthAdjust="spacingAndGlyphs">17 Oct 15:45</text>
<text x="770" y="889" textLength="54" lengthAdjust="spacingAndGlyphs">17 Oct 17:45</text>
<text x="834" y="889" textLength="54" lengthAdjust="spacingAndGlyphs">17 Oct 19:45</text>
<text x="898" y="889" textLength="54" lengthAdjust="spacingAndGlyphs">17 Oct 21:45</text>
<text x="962" y="889" textLength="54" lengthAdjust="spacingAndGlyphs">17 Oct 23:45</text>
<text x="1026" y="889" textLength="54" lengthAdjust="spacingAndGlyphs">18 Oct 01:45</text>
<text x="1090" y="889" textLength="54" lengthAdjust="spacingAndGlyphs">18 Oct 03:45</text>
<text x="1154" y="889" textLength="54" lengthAdjust="spacingAndGlyphs">18 Oct 05:45</text>
<text x="1218" y="889" textLength="54" lengthAdjust="spacingAndGlyphs">18 Oct 07:45</text>
<text x="1282" y="889" textLength="54" lengthAdjust="spacingAndGlyphs">18 Oct 09:45</text>
<text x="1346" y="889" textLength="54" lengthAdjust="spacingAndGlyphs">18 Oct 11:45</text>
<text x="1410" y="889" textLength="54" lengthAdjust="spacingAndGlyphs">18 Oct 13:45</text>
<text x="1474" y="889" textLength="54" lengthAdjust="spacingAndGlyphs">18 Oct 15:45</text>
<text x="1538" y="889" textLength="54" lengthAdjust="spacingAndGlyphs">18 Oct 17:45</text>
<text x="1602" y="889" textLength="54" lengthAdjust="spacingAndGlyphs">18 Oct 19:45</text>
</g>

<!-- titles -->
<text class="ttl" x="823" y="37.500" textLength="423.500" lengthAdjust="spacingAndGlyphs">Tornado Scalping Strategy</text>
<text class="ttl" x="1361" y="462.700" textLength="484" lengthAdjust="spacingAndGlyphs" style="fill:#1b8ae6">ForexStrategiesResources.com</text>
</svg>
</body>
</html>
